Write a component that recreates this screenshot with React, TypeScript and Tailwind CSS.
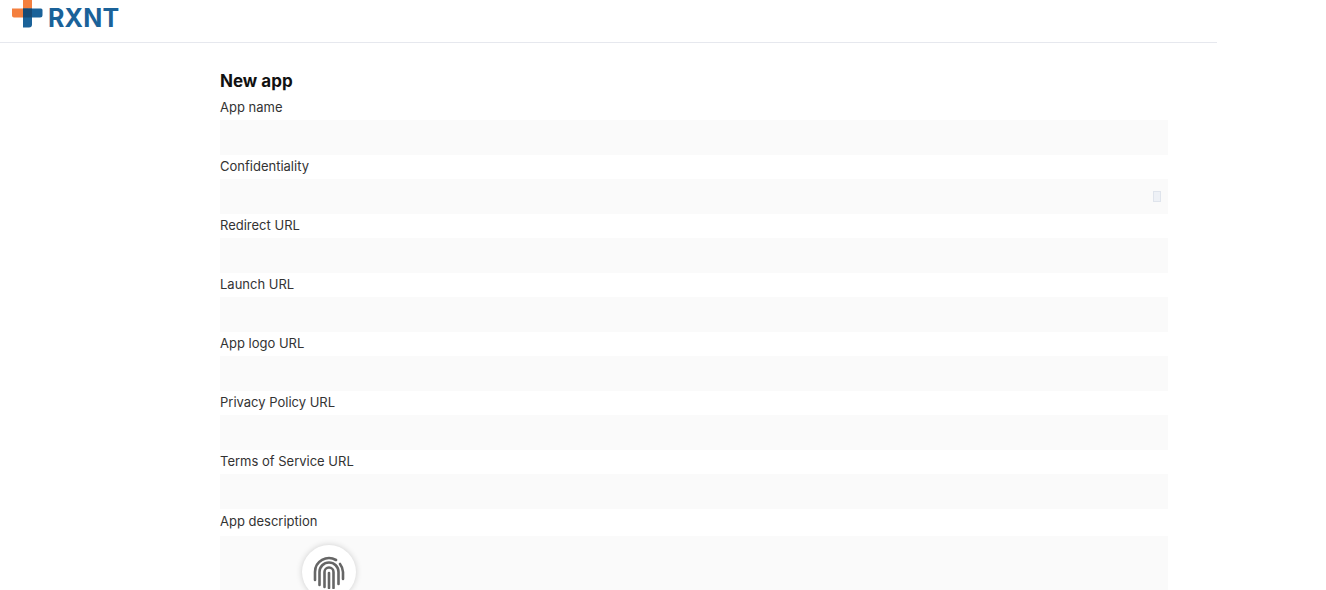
import { ReactNode } from 'react'

const fields = ['App name', 'Confidentiality', 'Redirect URL', 'Launch URL', 'App logo URL', 'Privacy Policy URL', 'Terms of Service URL']

function Field({ label, children }: { label: string; children?: ReactNode }) {
  return (
    <div className="relative">
      <label className="block h-[24px] pt-[2px] text-[13px] leading-[18px] text-[#333333]">{label}</label>
      <input className="block h-[35px] w-full bg-[#fafafa] outline-none" />
      {children}
    </div>
  )
}

function Logo() {
  return (
    <div className="flex h-[42px] items-start overflow-hidden pl-[12px]">
      <svg width="31" height="28" viewBox="0 0 31 28" className="shrink-0">
        <path d="M0 8.500h11V0h9v8.500h-4v9H2a2 2 0 0 1-2-2z" fill="#f47f3e" />
        <path d="M11 8.500h9v9h-9z" fill="#f47f3e" />
        <path d="M11 8.500h18a1.500 1.500 0 0 1 1.500 1.500v5a2.500 2.500 0 0 1-2.500 2.500h-8v7a3 3 0 0 1-3 3h-6v-10H11z" fill="#1a6299" />
        <path d="M11 8.500h9v9h-9z" fill="#174a75" />
      </svg>
      <span className="ml-[5px] mt-[3px] font-['Inter',sans-serif] text-[25px] leading-[30px] font-bold tracking-[0.2px] text-[#1a6299]">RXNT</span>
    </div>
  )
}

export default function App() {
  return (
    <div className="relative h-[590px] overflow-hidden bg-white font-['Inter',sans-serif]">
      <div className="w-[1217px]">
        <header className="border-b border-[#e6e8ee]">
          <Logo />
        </header>
        <form className="ml-[220px] w-[948px]">
          <h1 className="mt-[26px] h-[27px] text-[17px] leading-[24px] font-bold text-[#111111]">New app</h1>
          {fields.map((f) => (
            <Field key={f} label={f}>
              {f === 'Confidentiality' && (
                <span className="absolute right-[7px] bottom-[12px] h-[11px] w-[8px] border border-[#dfe4ec] bg-[#eef1f6]" />
              )}
            </Field>
          ))}
          <label className="block h-[27px] pt-[3px] text-[13px] leading-[18px] text-[#333333]">App description</label>
          <textarea className="block h-[60px] w-full resize-none bg-[#fafafa] outline-none" />
        </form>
      </div>

      <button className="absolute top-[545px] left-[302px] flex h-[54px] w-[54px] items-center justify-center rounded-full bg-white shadow-[0_0_6px_rgba(0,0,0,0.18)]">
        <svg width="34" height="34" viewBox="0 0 34 34" fill="none" stroke="#666666" strokeWidth="2.6" strokeLinecap="round">
          <path d="M3 25v-8a14 14 0 0 1 21-12" />
          <path d="M28 9a14 14 0 0 1 3 8v7" />
          <path d="M7.500 30v-13a9.500 9.500 0 0 1 19 0v12" />
          <path d="M12.500 32v-15a4.500 4.500 0 0 1 9 0v16" />
          <path d="M17 18v15" />
        </svg>
      </button>
    </div>
  )
}
